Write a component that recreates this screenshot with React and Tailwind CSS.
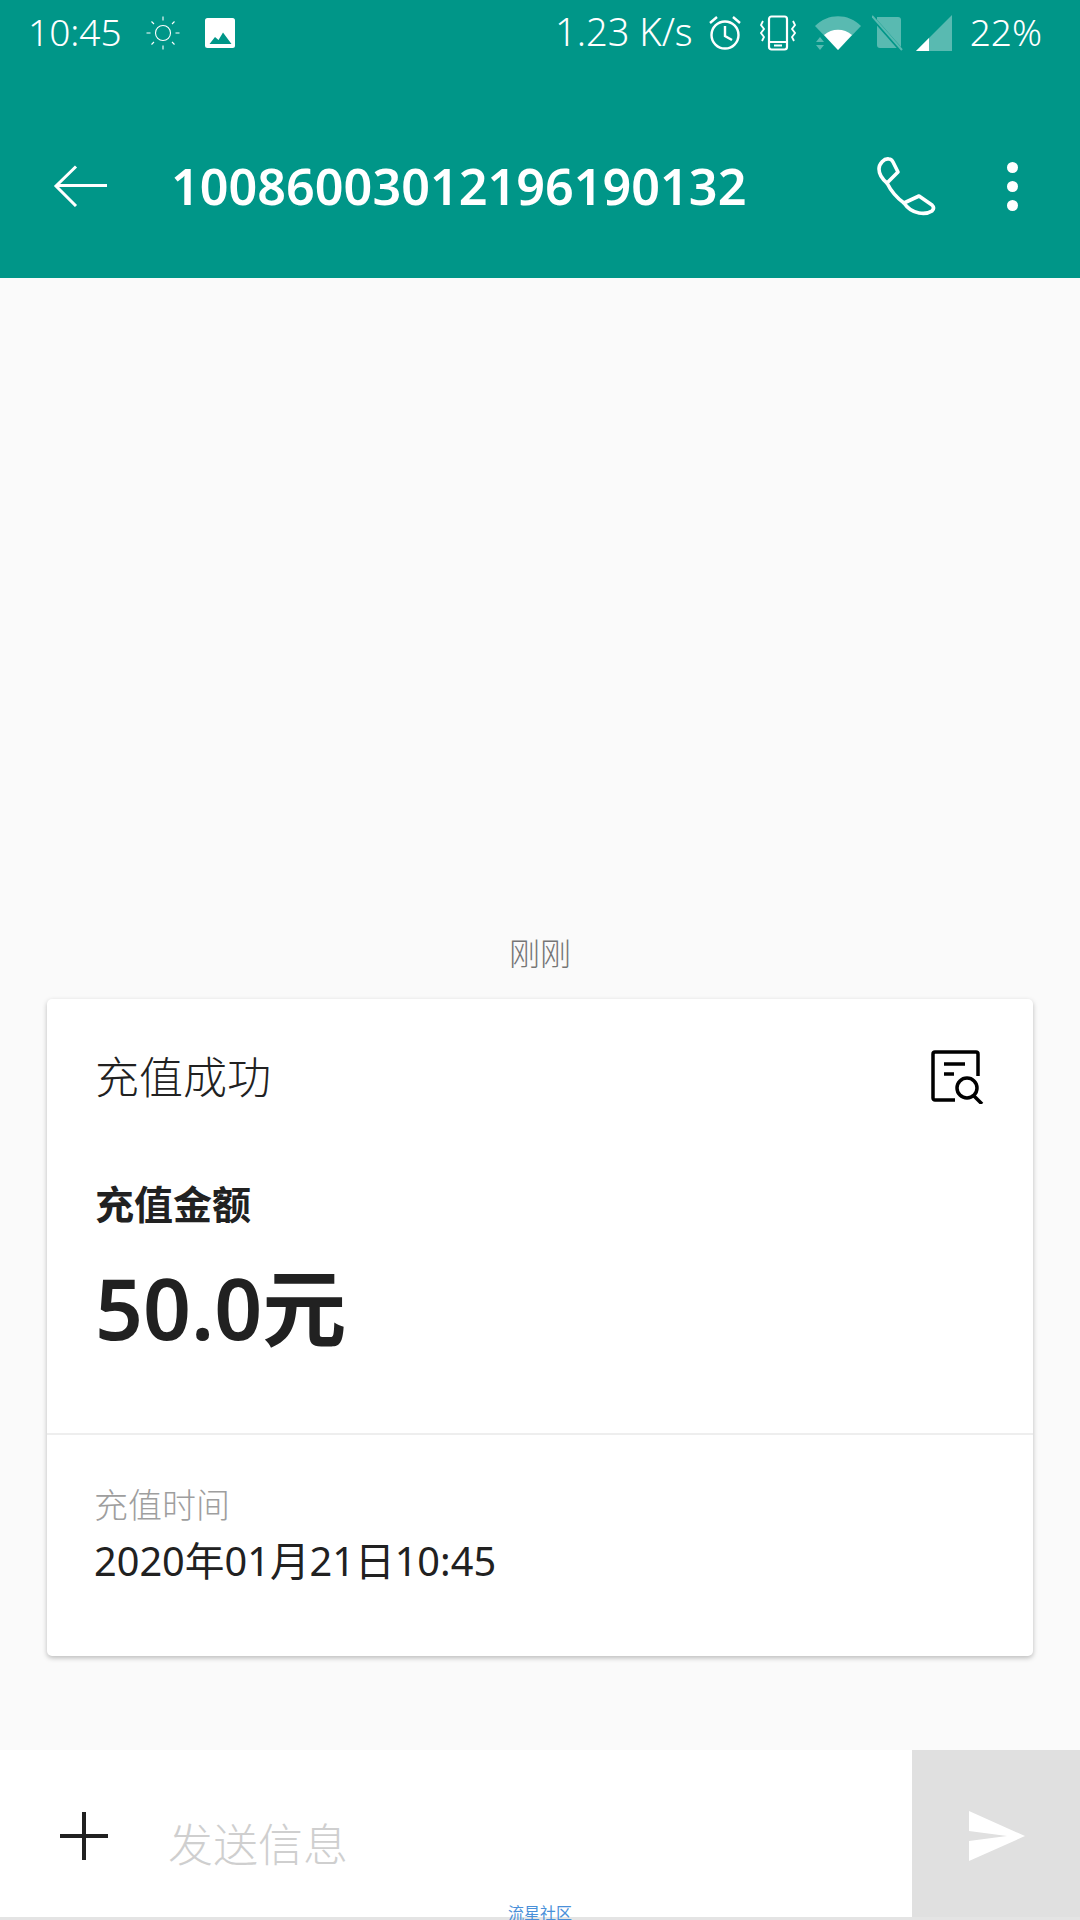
const cjk = '"Noto Sans", "Noto Sans CJK SC", sans-serif';

function StatusLeft() {
  return (
    <div className="flex items-center">
      <span className="mt-[-4px] text-[37px] font-light leading-none text-white">10:45</span>
      <svg className="ml-[23px]" width="36" height="36" viewBox="0 0 36 36" fill="none" stroke="white" strokeWidth="1.100">
        <circle cx="18" cy="18" r="7.500" />
        <path d="M18 1.500v4M18 30.500v4M1.500 18h4M30.500 18h4M6.500 6.500l2.500 2.500M27 27l2.500 2.500M29.500 6.500L27 9M9 27l-2.500 2.500" />
      </svg>
      <svg className="ml-[24px]" width="30" height="30" viewBox="0 0 30 30">
        <rect width="30" height="30" rx="2.500" fill="white" />
        <path d="M4.500 26l5.500-7 3.500 3 4.500-7.500 8.500 11.500z" fill="#009688" />
      </svg>
    </div>
  );
}

function StatusRight() {
  return (
    <div className="flex items-center">
      <span className="mt-[-4px] text-[38px] font-light leading-none text-white whitespace-nowrap">1.23 K/s</span>
      <svg className="ml-[15px]" width="34" height="36" viewBox="0 0 34 36" fill="none" stroke="white" strokeWidth="2.400">
        <circle cx="17" cy="20" r="13.500" />
        <path d="M17 11v10l7 4M2 8l7-6M32 8l-7-6" />
      </svg>
      <svg className="ml-[18px]" width="36" height="36" viewBox="0 0 36 36" fill="none" stroke="white" strokeWidth="2.200">
        <rect x="9" y="1.500" width="18" height="33" rx="2.500" />
        <path d="M9 27h18" strokeWidth="2" />
        <path d="M14 30.500h8" strokeWidth="2" />
        <path d="M3 6l-2 4 3 4-3 4 3 4-2 4M33 6l2 4-3 4 3 4-3 4 2 4" strokeWidth="1.800" />
      </svg>
      <svg className="ml-[19px]" width="46" height="36" viewBox="0 0 46 36">
        <path d="M23 35L0 11C13 -2 33 -2 46 11z" fill="white" fillOpacity="0.35" />
        <path d="M23 35L9 20c8-7 20-7 28 0z" fill="white" />
        <path d="M1 27l4-5 4 5zM1 30l4 5 4-5z" fill="white" fillOpacity="0.35" />
      </svg>
      <svg className="ml-[11px]" width="32" height="36" viewBox="0 0 32 36">
        <path d="M5 2h21a3 3 0 0 1 3 3v28H8a3 3 0 0 1-3-3z" fill="white" fillOpacity="0.35" />
        <path d="M0 2l30 34" stroke="#009688" strokeWidth="4" />
        <path d="M0 1l30 34" stroke="white" strokeOpacity="0.35" strokeWidth="2" />
      </svg>
      <svg className="ml-[12px]" width="36" height="36" viewBox="0 0 36 36">
        <path d="M0 36L36 0v36z" fill="white" fillOpacity="0.35" />
        <path d="M0 36l13-13v13z" fill="white" />
      </svg>
      <span className="ml-[18px] mt-[-4px] text-[37px] font-light leading-none text-white">22%</span>
    </div>
  );
}

export default function App() {
  return (
    <div className="relative flex h-[1920px] w-[1080px] flex-col overflow-hidden bg-[#fafafa]" style={{ fontFamily: cjk }}>
      <header className="h-[278px] shrink-0 bg-[#009688]">
        <div className="flex h-[66px] items-center justify-between pl-[28px] pr-[38px]">
          <StatusLeft />
          <StatusRight />
        </div>
        <div className="mt-[90px] flex h-[60px] items-center">
          <svg className="ml-[53px]" width="54" height="42" viewBox="0 0 54 42" fill="none" stroke="white" strokeWidth="3">
            <path d="M54 20.500H3M23 1.500L3 21l20 20" />
          </svg>
          <h1 className="ml-[64px] text-[50.3px] font-semibold leading-none text-white">10086003012196190132</h1>
          <svg className="ml-auto" width="60" height="60" viewBox="0 0 60 60" fill="none" stroke="white" strokeWidth="3.600" strokeLinejoin="round">
            <path d="M11 27C5 22 3 17 3 13c0-5 5-11 10-10 2 0 3 1 4 3l5 10-11 11z" />
            <path d="M11 27c4 8 10 15 17 20" />
            <path d="M28 47l15-7 13 9c2 2 2 4 0 6-3 2-7 3-13 2-6-1-11-4-15-10z" />
          </svg>
          <div className="ml-[71px] mr-[62px] flex flex-col gap-[8px]">
            <div className="size-[11px] rounded-full bg-white" />
            <div className="size-[11px] rounded-full bg-white" />
            <div className="size-[11px] rounded-full bg-white" />
          </div>
        </div>
      </header>

      <main className="flex flex-1 flex-col justify-end pb-[94px]">
        <p className="text-center text-[31px] font-light leading-none text-[#757575]">刚刚</p>
        <section className="mx-[47px] mt-[30px] rounded-[5px] bg-white shadow-[0_2px_5px_rgba(0,0,0,0.25)]">
          <div className="px-[48px] pt-[51px] pb-[83px]">
            <div className="flex items-center justify-between">
              <h2 className="text-[44px] font-light leading-none text-[#212121]">充值成功</h2>
              <svg width="54" height="54" viewBox="0 0 54 54" fill="none" stroke="black" strokeWidth="3.500">
                <path d="M24 50H4a2 2 0 0 1-2-2V4a2 2 0 0 1 2-2h41a2 2 0 0 1 2 2v22" />
                <path d="M13 14h21M13 24h10" />
                <circle cx="36" cy="38" r="10" />
                <path d="M43 46l8 8" />
              </svg>
            </div>
            <h3 className="mt-[80px] text-[39px] font-semibold leading-none text-[#212121]">充值金额</h3>
            <p className="mt-[43px] text-[84px] font-semibold leading-none text-[#212121]">50.0元</p>
          </div>
          <div className="border-t-2 border-[#eeeeee] px-[47px] pt-[53px] pb-[74px]">
            <p className="text-[34px] font-light leading-none text-[#9e9e9e]">充值时间</p>
            <p className="mt-[20px] text-[39.7px] font-normal leading-none text-[#212121]">2020年01月21日10:45</p>
          </div>
        </section>
      </main>

      <footer className="flex h-[167px] shrink-0 bg-white">
        <div className="flex flex-1 items-center">
          <svg className="mb-[-4px] ml-[60px]" width="48" height="48" viewBox="0 0 48 48" stroke="#212121" strokeWidth="4">
            <path d="M24 0v48M0 24h48" />
          </svg>
          <span className="ml-[60px] mt-[22px] text-[45px] font-light leading-none text-[#cfcfcf]">发送信息</span>
        </div>
        <div className="flex w-[168px] items-center justify-center bg-[#e0e0e0] pl-[2px] pt-[4px]">
          <svg width="56" height="50" viewBox="0 0 56 50" fill="white">
            <path d="M0 0l56 25L0 50V30l38-5L0 20z" />
          </svg>
        </div>
      </footer>
      <div className="h-[3px] shrink-0 bg-[#e4e4e4]" />
      <span className="absolute bottom-[-1px] left-1/2 -translate-x-1/2 text-[16px] leading-none text-[#4a90d9]">流星社区</span>
    </div>
  );
}
